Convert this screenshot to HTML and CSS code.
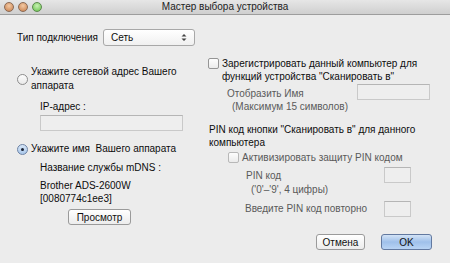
FILE: index.html
```html
<!DOCTYPE html>
<html lang="ru">
<head>
    <meta charset="UTF-8">
    <title>Мастер выбора устройства</title>
    <link rel="stylesheet" href="styles.css">
</head>
<body>
    <div class="window">
        <!-- заголовок окна -->
        <div class="titlebar">
            <div class="lights">
                <span class="light red"></span>
                <span class="light yellow"></span>
                <span class="light green"></span>
            </div>
            <div class="title">Мастер выбора устройства</div>
        </div>

        <div class="content">
            <div class="conn-row">
                <span class="conn-label">Тип подключения</span>
                <div class="select">
                    <span>Сеть</span>
                    <svg class="arrows" width="6" height="9" viewBox="0 0 6 9">
                        <path d="M0.5 3.5 L3 1 L5.5 3.5 Z M0.5 5.5 L3 8 L5.5 5.5 Z" fill="#444"/>
                    </svg>
                </div>
            </div>

            <div class="columns">
                <!-- левая колонка -->
                <div class="left">
                    <div class="option option-first">
                        <span class="radio"></span>
                        <span class="option-text">Укажите сетевой адрес Вашего<br>аппарата</span>
                    </div>
                    <div class="field-label ip-label">IP-адрес :</div>
                    <div class="textbox ip-box"></div>

                    <div class="option option-second">
                        <span class="radio checked"></span>
                        <span class="option-text">Укажите имя&nbsp; Вашего аппарата</span>
                    </div>
                    <div class="field-label mdns-label">Название службы mDNS :</div>
                    <div class="field-label device">Brother ADS-2600W<br>[0080774c1ee3]</div>
                    <div class="browse-row">
                        <button class="btn">Просмотр</button>
                    </div>
                </div>

                <!-- правая колонка -->
                <div class="right">
                    <div class="check-row">
                        <span class="checkbox"></span>
                        <span>Зарегистрировать данный компьютер для<br>функций устройства "Сканировать в"</span>
                    </div>
                    <div class="name-row">
                        <div class="name-text dim">
                            <div>Отобразить Имя</div>
                            <div class="indent">(Максимум 15 символов)</div>
                        </div>
                        <div class="textbox name-box"></div>
                    </div>
                    <div class="pin-head">PIN код кнопки "Сканировать в" для данного<br>компьютера</div>
                    <div class="check-row pin-check dim">
                        <span class="checkbox"></span>
                        <span>Активизировать защиту PIN кодом</span>
                    </div>
                    <div class="pin-row">
                        <div class="dim pin-text">
                            <div>PIN код</div>
                            <div class="indent">('0'–'9', 4 цифры)</div>
                        </div>
                        <div class="textbox pin-box"></div>
                    </div>
                    <div class="pin-row repeat-row">
                        <div class="dim pin-text">Введите PIN код повторно</div>
                        <div class="textbox pin-box"></div>
                    </div>
                </div>
            </div>

            <div class="footer">
                <button class="btn cancel">Отмена</button>
                <button class="btn ok">OK</button>
            </div>
        </div>
    </div>
</body>
</html>
```

FILE: styles.css
```css
body {
    margin: 0;
    font-family: 'Liberation Sans', Arial, sans-serif;
    font-size: 10px;
    line-height: 13px;
    color: #0d0d0d;
    background-color: #ececec;
    white-space: nowrap;
}
.window {
    width: 450px;
    height: 263px;
    overflow: hidden;
    display: flex;
    flex-direction: column;
}
.titlebar {
    position: relative;
    height: 14px;
    flex-shrink: 0;
    background: linear-gradient(#e6e6e6, #cfcfcf);
    border-bottom: 1px solid #9d9d9d;
}
.lights {
    position: absolute;
    left: 4px;
    top: 2px;
    display: flex;
    gap: 4px;
}
.light {
    width: 10px;
    height: 10px;
    border-radius: 50%;
    box-sizing: border-box;
    border: 1px solid #8a6a55;
}
.red, .yellow {
    background: radial-gradient(circle at 50% 35%, #f3c9a4, #c77e4a);
}
.green {
    border-color: #5b8a4c;
    background: radial-gradient(circle at 50% 35%, #c9f1b4, #64c049);
}
.title {
    text-align: center;
    font-size: 10px;
    line-height: 14px;
    color: #222;
}
.content {
    flex: 1;
    display: flex;
    flex-direction: column;
    padding: 0 17px;
}
.conn-row {
    display: flex;
    align-items: center;
    gap: 5px;
    margin-top: 14px;
}
.select {
    width: 92px;
    height: 17px;
    box-sizing: border-box;
    border: 1px solid #a8a8a8;
    border-radius: 3px;
    background: linear-gradient(#ffffff, #f0f0f0);
    display: flex;
    align-items: center;
    justify-content: space-between;
    padding: 0 7px 0 7px;
}
.columns {
    display: flex;
    margin-top: 10px;
}
.left {
    width: 191px;
}
.right {
    flex: 1;
    padding-top: 1px;
}
.option {
    display: flex;
    align-items: center;
    gap: 3px;
}
.option-first {
    margin-top: 9px;
}
.radio {
    width: 11px;
    height: 11px;
    box-sizing: border-box;
    border: 1px solid #8d8d8d;
    border-radius: 50%;
    background: linear-gradient(#fdfdfd, #e9e9e9);
    flex-shrink: 0;
    position: relative;
}
.radio.checked {
    border-color: #6d83a6;
    background: linear-gradient(#d7e6f7, #a9c7ea);
}
.radio.checked::after {
    content: '';
    position: absolute;
    left: 3px;
    top: 3px;
    width: 3px;
    height: 3px;
    border-radius: 50%;
    background: #1a2233;
}
.option-text {
    line-height: 14px;
}
.field-label {
    margin-left: 23px;
}
.ip-label {
    margin-top: 7px;
}
.textbox {
    box-sizing: border-box;
    border: 1px solid #c9c9c9;
    border-top-color: #b5b5b5;
    background: #eeeeee;
}
.ip-box {
    margin: 2px 0 0 23px;
    width: 143px;
    height: 16px;
}
.option-second {
    margin-top: 11px;
}
.mdns-label {
    margin-top: 5px;
}
.device {
    margin-top: 5px;
}
.browse-row {
    margin: 4px 0 0 51px;
}
.btn {
    font-family: inherit;
    font-size: 10px;
    line-height: 13px;
    color: #111;
    border: 1px solid #9a9a9a;
    border-radius: 3px;
    background: linear-gradient(#ffffff, #ececec);
    height: 16px;
    padding: 0;
    width: 63px;
}
.check-row {
    display: flex;
    align-items: flex-start;
    gap: 3px;
}
.checkbox {
    width: 11px;
    height: 11px;
    box-sizing: border-box;
    border: 1px solid #959595;
    border-radius: 2px;
    background: linear-gradient(#fdfdfd, #ebebeb);
    flex-shrink: 0;
    margin-top: 1px;
}
.dim {
    color: #5a5a5a;
}
.dim .checkbox {
    border-color: #b8b8b8;
}
.name-row {
    display: flex;
    justify-content: space-between;
    margin-top: 1px;
    padding-left: 19px;
    padding-right: 3px;
}
.name-text {
    margin-top: 3px;
}
.indent {
    padding-left: 5px;
}
.name-box {
    width: 73px;
    height: 16px;
}
.pin-head {
    margin-top: 10px;
    margin-left: 1px;
}
.pin-check {
    margin-top: 2px;
    margin-left: 20px;
}
.pin-row {
    display: flex;
    justify-content: space-between;
    padding-left: 38px;
    padding-right: 22px;
    margin-top: 2px;
}
.pin-text {
    margin-top: 3px;
    line-height: 14px;
}
.pin-box {
    width: 27px;
    height: 16px;
    margin-top: 1px;
}
.repeat-row {
    margin-top: 4px;
    padding-left: 37px;
}
.repeat-row .pin-text {
    margin-top: 1px;
}
.repeat-row .pin-box {
    margin-top: 0;
}
.footer {
    display: flex;
    justify-content: flex-end;
    gap: 16px;
    margin-top: auto;
    margin-bottom: 13px;
    padding-right: 1px;
}
.cancel {
    width: 49px;
}
.ok {
    width: 51px;
    border-color: #6279a0;
    background: linear-gradient(#d3e3f6, #9fc0ea 50%, #b9d4f4);
}
```
